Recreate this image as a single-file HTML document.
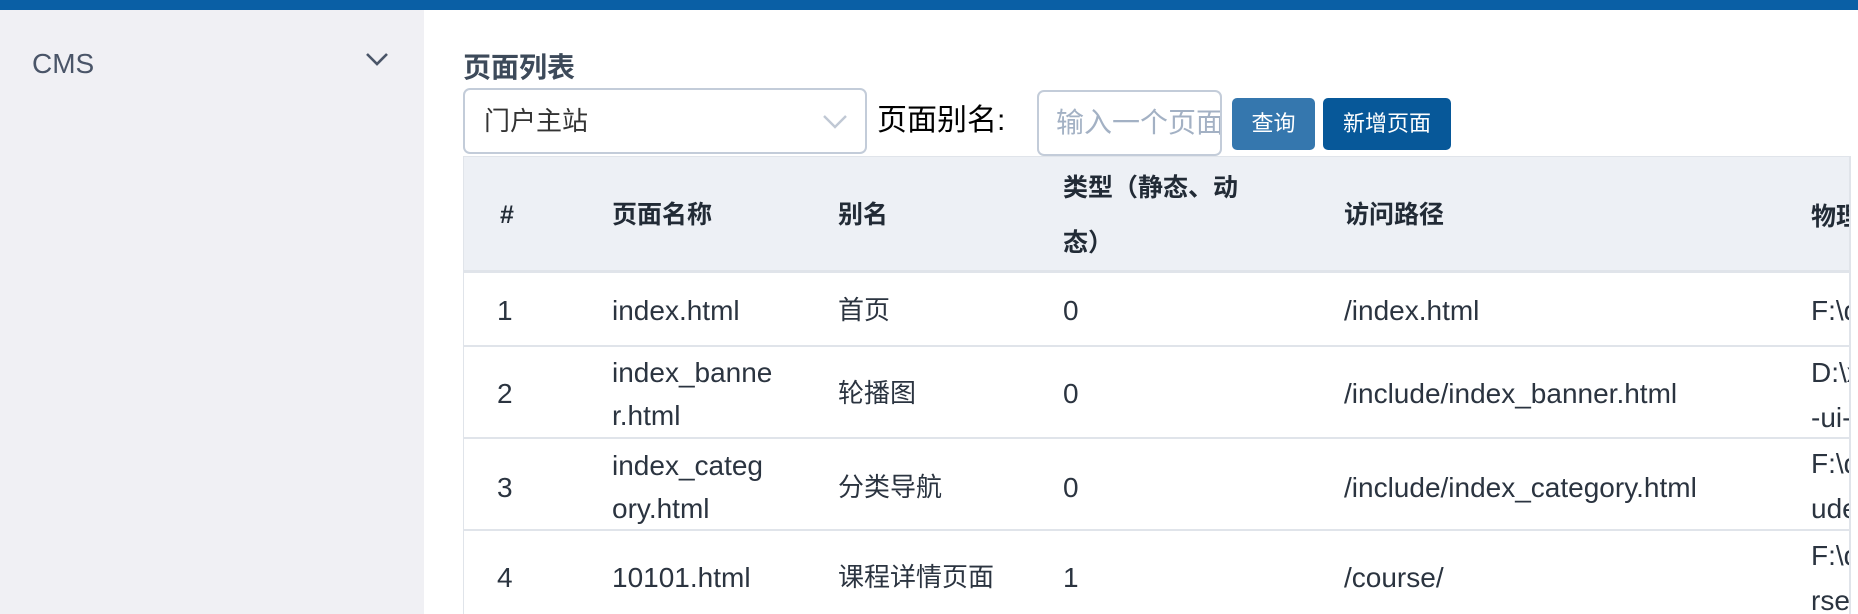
<!DOCTYPE html>
<html><head><meta charset="utf-8"><style>
*{margin:0;padding:0;box-sizing:border-box}
body{width:1858px;height:614px;overflow:hidden;background:#fff;position:relative;font-family:"Liberation Sans","Noto Sans CJK SC",sans-serif;color:#2b3440}
.a{position:absolute;white-space:nowrap}
.top{left:0;top:0;width:1858px;height:10px;background:#0a5fa5}
.side{left:0;top:10px;width:424px;height:604px;background:#f0f0f4}
.t{font-size:28px;line-height:43px;transform:translateY(-21px)}
.c{font-size:26px}
.h{font-size:25px;font-weight:bold;color:#222b36;line-height:55px;transform:translateY(-27px)}
.line{left:463px;width:1387px;height:2px;background:#e0e4ea}
</style></head><body>
<div class="a top"></div>
<div class="a side"></div>
<div class="a" style="left:32px;top:42px;font-size:28px;color:#4a5568;line-height:44px">CMS</div>
<svg class="a" style="left:364px;top:51px" width="26" height="18"><path d="M3 3 L13 13 L23 3" fill="none" stroke="#4a5568" stroke-width="2.6"/></svg>

<div class="a" style="left:463px;top:49px;font-size:28px;font-weight:bold;color:#3d4a5a;line-height:38px">页面列表</div>
<div class="a" style="left:463px;top:88px;width:404px;height:66px;border:2px solid #c3ccd9;border-radius:7px"></div>
<div class="a" style="left:484px;top:100px;font-size:26px;color:#333;line-height:42px">门户主站</div>
<svg class="a" style="left:822px;top:114px" width="26" height="16"><path d="M2 2 L13 13 L24 2" fill="none" stroke="#c0c8d4" stroke-width="2.4"/></svg>
<div class="a" style="left:877px;top:99px;font-size:30px;color:#000;line-height:44px">页面别名:</div>
<div class="a" style="left:1037px;top:90px;width:185px;height:66px;border:2px solid #c3ccd9;border-radius:7px;overflow:hidden"><span class="a" style="left:17px;top:11px;font-size:28px;color:#a3b1c4;line-height:40px">输入一个页面别名</span></div>
<div class="a" style="left:1232px;top:98px;width:83px;height:52px;background:#3577ae;border-radius:5px;color:#fff;font-size:22px;line-height:52px;text-align:center">查询</div>
<div class="a" style="left:1323px;top:98px;width:128px;height:52px;background:#075899;border-radius:5px;color:#fff;font-size:22px;line-height:52px;text-align:center">新增页面</div>

<div class="a" style="left:463px;top:156px;width:1387px;height:115px;background:#edf0f5"></div>
<div class="a" style="left:463px;top:156px;width:1388px;height:458px;border-left:1px solid #e0e4ea;border-right:2px solid #e0e4ea;border-top:1px solid #e0e4ea"></div>
<div class="a line" style="top:270px;height:3px"></div>
<div class="a line" style="top:345px"></div>
<div class="a line" style="top:437px"></div>
<div class="a line" style="top:529px"></div>

<div class="a h" style="left:500px;top:215px">#</div>
<div class="a h" style="left:612px;top:215px">页面名称</div>
<div class="a h" style="left:838px;top:215px">别名</div>
<div class="a h" style="left:1063px;top:188px">类型（静态、动</div>
<div class="a h" style="left:1063px;top:243px">态）</div>
<div class="a h" style="left:1344px;top:215px">访问路径</div>
<div class="a" style="left:1811px;top:150px;width:38px;height:120px;overflow:hidden"><div class="a h" style="left:0;top:67px">物理路径</div></div>

<div class="a t" style="left:497px;top:310px">1</div>
<div class="a t" style="left:612px;top:310px">index.html</div>
<div class="a t c" style="left:838px;top:310px">首页</div>
<div class="a t" style="left:1063px;top:310px">0</div>
<div class="a t" style="left:1344px;top:310px">/index.html</div>

<div class="a t" style="left:497px;top:393px">2</div>
<div class="a t" style="left:612px;top:372px">index_banne</div>
<div class="a t" style="left:612px;top:415px">r.html</div>
<div class="a t c" style="left:838px;top:393px">轮播图</div>
<div class="a t" style="left:1063px;top:393px">0</div>
<div class="a t" style="left:1344px;top:393px">/include/index_banner.html</div>

<div class="a t" style="left:497px;top:487px">3</div>
<div class="a t" style="left:612px;top:465px">index_categ</div>
<div class="a t" style="left:612px;top:508px">ory.html</div>
<div class="a t c" style="left:838px;top:487px">分类导航</div>
<div class="a t" style="left:1063px;top:487px">0</div>
<div class="a t" style="left:1344px;top:487px">/include/index_category.html</div>

<div class="a t" style="left:497px;top:577px">4</div>
<div class="a t" style="left:612px;top:577px">10101.html</div>
<div class="a t c" style="left:838px;top:577px">课程详情页面</div>
<div class="a t" style="left:1063px;top:577px">1</div>
<div class="a t" style="left:1344px;top:577px">/course/</div>

<div class="a" style="left:1811px;top:273px;width:38px;height:341px;overflow:hidden">
<div class="a t" style="left:0;top:37px">F:\develop</div>
<div class="a t" style="left:0;top:99px">D:\xc</div>
<div class="a t" style="left:0;top:144px">-ui-pc</div>
<div class="a t" style="left:0;top:190px">F:\develop</div>
<div class="a t" style="left:0;top:235px">ude\</div>
<div class="a t" style="left:0;top:282px">F:\develop</div>
<div class="a t" style="left:0;top:327px">rse\</div>
</div>
</body></html>
